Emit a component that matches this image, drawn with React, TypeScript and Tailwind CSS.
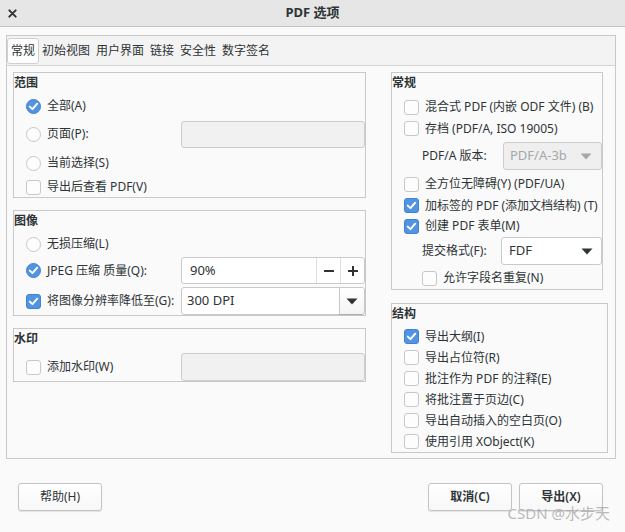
import React from 'react';

const FONT = "font-['Noto_Sans','Noto_Sans_CJK_SC',sans-serif]";

function CheckMark({ color = 'white' }: { color?: string }) {
  return (
    <svg viewBox="0 0 15 15" className="h-[15px] w-[15px]">
      <path d="M3.2 7.6 L6.3 10.6 L11.8 4.2" fill="none" stroke={color} strokeWidth="2.2" strokeLinecap="round" strokeLinejoin="round" />
    </svg>
  );
}

function Check({ on = false }: { on?: boolean }) {
  if (on) {
    return (
      <span className="flex h-[15px] w-[15px] shrink-0 items-center justify-center rounded-[3px] border border-[#3f82d3] bg-[#5294e2]">
        <CheckMark />
      </span>
    );
  }
  return <span className="h-[15px] w-[15px] shrink-0 rounded-[3px] border border-[#c8c8c8] bg-[#fdfdfd]" />;
}

function Radio({ on = false }: { on?: boolean }) {
  if (on) {
    return (
      <span className="flex h-[15px] w-[15px] shrink-0 items-center justify-center rounded-full border border-[#3f82d3] bg-[#5294e2]">
        <CheckMark />
      </span>
    );
  }
  return <span className="h-[15px] w-[15px] shrink-0 rounded-full border border-[#c8c8c8] bg-[#fdfdfd]" />;
}

function Arrow({ color = '#2e3436' }: { color?: string }) {
  return (
    <svg viewBox="0 0 12 7" className="h-[7px] w-[12px]">
      <path d="M0.5 0.5 H11.5 L6 6.5 Z" fill={color} />
    </svg>
  );
}

function Frame({ title, className = '', children }: { title: string; className?: string; children: React.ReactNode }) {
  return (
    <div className={`flex flex-col border border-[#c9c9c9] ${className}`}>
      <div className="h-[20px] text-[12px] leading-[20px] font-bold">{title}</div>
      {children}
    </div>
  );
}

function Row({ h, className = '', children }: { h: string; className?: string; children: React.ReactNode }) {
  return <div className={`flex shrink-0 items-center gap-[6px] ${h} ${className}`}>{children}</div>;
}

function DisabledEntry() {
  return <div className="ml-auto h-[28px] w-[184px] rounded-[3px] border border-[#cdcdcd] bg-[#f1f1f1]" />;
}

function Button({ label, bold = false }: { label: string; bold?: boolean }) {
  return (
    <button
      className={`h-[28px] w-[84px] rounded-[3px] border border-[#c4c4c4] bg-gradient-to-b from-white to-[#f7f7f7] text-[12px] shadow-[0_1px_1px_rgba(0,0,0,0.1)] ${bold ? 'font-semibold' : ''}`}
    >
      {label}
    </button>
  );
}

export default function App() {
  return (
    <div className={`relative flex h-[532px] w-[625px] flex-col overflow-hidden bg-[#fafafa] text-[12px] text-[#2e3436] ${FONT}`}>
      {/* title bar */}
      <div className="grid h-[27px] shrink-0 grid-cols-[1fr_auto_1fr] items-center border-b border-[#c4c4c4] bg-[#e6e6e6] px-[8px]">
        <svg viewBox="0 0 10 10" className="h-[9px] w-[9px]">
          <path d="M1.5 1.5 L8.5 8.5 M8.5 1.5 L1.5 8.5" stroke="#2e3436" strokeWidth="2.2" strokeLinecap="round" />
        </svg>
        <span className="text-[13px] font-bold">PDF 选项</span>
        <span />
      </div>

      {/* notebook */}
      <div className="mx-[6px] mt-[8px] flex h-[424px] w-[610px] flex-col border border-[#c9c9c9]">
        <div className="flex h-[30px] shrink-0 items-center border-b border-[#d4d4d4] bg-[#f3f3f3] text-[12px]">
          <span className="flex h-[26px] items-center rounded-[3px] border border-[#cfcfcf] bg-white px-[3px]">常规</span>
          <span className="px-[3px]">初始视图</span>
          <span className="px-[3px]">用户界面</span>
          <span className="px-[3px]">链接</span>
          <span className="px-[3px]">安全性</span>
          <span className="px-[3px]">数字签名</span>
        </div>

        <div className="flex flex-1 gap-[25px] px-[6px] pt-[6px]">
          {/* left column */}
          <div className="flex w-[353px] flex-col gap-[12px]">
            <Frame title="范围">
              <Row h="h-[26px]" className="pl-[12px]">
                <Radio on />
                <span>全部(A)</span>
              </Row>
              <Row h="h-[30px]" className="pl-[12px]">
                <Radio />
                <span>页面(P):</span>
                <div className="ml-auto h-[27px] w-[184px] rounded-[3px] border border-[#cdcdcd] bg-[#f1f1f1]" />
              </Row>
              <Row h="h-[28px]" className="pl-[12px]">
                <Radio />
                <span>当前选择(S)</span>
              </Row>
              <Row h="h-[20px]" className="pl-[12px]">
                <Check />
                <span>导出后查看 PDF(V)</span>
              </Row>
            </Frame>

            <Frame title="图像">
              <Row h="h-[26px]" className="pl-[12px]">
                <Radio />
                <span>无损压缩(L)</span>
              </Row>
              <Row h="h-[27px]" className="pl-[12px]">
                <Radio on />
                <span>JPEG 压缩 质量(Q):</span>
                <div className="ml-auto flex h-[27px] w-[184px] rounded-[3px] border border-[#c9c9c9] bg-white">
                  <span className="flex flex-1 items-center pl-[8px] text-[13px]">90%</span>
                  <span className="flex w-[24px] items-center justify-center border-l border-[#e0e0e0]">
                    <svg viewBox="0 0 12 12" className="h-[12px] w-[12px]">
                      <path d="M1 6 H11" stroke="#2e3436" strokeWidth="2" />
                    </svg>
                  </span>
                  <span className="flex w-[24px] items-center justify-center border-l border-[#e0e0e0]">
                    <svg viewBox="0 0 12 12" className="h-[12px] w-[12px]">
                      <path d="M1 6 H11 M6 1 V11" stroke="#2e3436" strokeWidth="2" />
                    </svg>
                  </span>
                </div>
              </Row>
              <Row h="h-[28px]" className="mt-[3px] pl-[12px]">
                <Check on />
                <span>将图像分辨率降低至(G):</span>
                <div className="ml-auto flex h-[28px] w-[184px] rounded-[3px] border border-[#c9c9c9] bg-white">
                  <span className="flex flex-1 items-center pl-[5px] text-[13px]">300 DPI</span>
                  <span className="flex w-[25px] items-center justify-center rounded-r-[3px] border-l border-[#c9c9c9] bg-gradient-to-b from-white to-[#f4f4f4] shadow-[0_1px_1px_rgba(0,0,0,0.15)]">
                    <Arrow />
                  </span>
                </div>
              </Row>
            </Frame>

            <Frame title="水印">
              <Row h="h-[28px]" className="mt-[4px] pl-[12px]">
                <Check />
                <span>添加水印(W)</span>
                <DisabledEntry />
              </Row>
            </Frame>
          </div>

          {/* right column */}
          <div className="flex w-[217px] flex-col gap-[13px]">
            <Frame title="常规" className="w-[212px]">
              <Row h="h-[22px]" className="mt-[3px] pl-[12px]">
                <Check />
                <span className="whitespace-nowrap">混合式 PDF (内嵌 ODF 文件) (B)</span>
              </Row>
              <Row h="h-[21px]" className="pl-[12px]">
                <Check />
                <span>存档 (PDF/A, ISO 19005)</span>
              </Row>
              <Row h="h-[34px]" className="pl-[30px]">
                <span>PDF/A 版本:</span>
                <div className="ml-auto flex h-[28px] w-[99px] items-center justify-between rounded-[3px] border border-[#cdcdcd] bg-[#efefef] pr-[9px] pl-[6px] text-[13px] text-[#a5a8aa]">
                  <span>PDF/A-3b</span>
                  <Arrow color="#a5a8aa" />
                </div>
              </Row>
              <Row h="h-[22px]" className="pl-[12px]">
                <Check />
                <span>全方位无障碍(Y) (PDF/UA)</span>
              </Row>
              <Row h="h-[21px]" className="pl-[12px]">
                <Check on />
                <span className="whitespace-nowrap">加标签的 PDF (添加文档结构) (T)</span>
              </Row>
              <Row h="h-[20px]" className="pl-[12px]">
                <Check on />
                <span>创建 PDF 表单(M)</span>
              </Row>
              <Row h="h-[30px]" className="pl-[30px]">
                <span>提交格式(F):</span>
                <div className="ml-auto flex h-[28px] w-[101px] items-center justify-between rounded-[3px] border border-[#c9c9c9] bg-white pr-[8px] pl-[7px] text-[13px]">
                  <span>FDF</span>
                  <Arrow />
                </div>
              </Row>
              <Row h="h-[23px]" className="pt-[1px] pl-[30px]">
                <Check />
                <span>允许字段名重复(N)</span>
              </Row>
            </Frame>

            <Frame title="结构" className="w-[217px]">
              <div className="mt-[2px] flex flex-col pl-[12px]">
                <Row h="h-[21px]">
                  <Check on />
                  <span>导出大纲(I)</span>
                </Row>
                <Row h="h-[21px]">
                  <Check />
                  <span>导出占位符(R)</span>
                </Row>
                <Row h="h-[21px]">
                  <Check />
                  <span>批注作为 PDF 的注释(E)</span>
                </Row>
                <Row h="h-[21px]">
                  <Check />
                  <span>将批注置于页边(C)</span>
                </Row>
                <Row h="h-[21px]">
                  <Check />
                  <span>导出自动插入的空白页(O)</span>
                </Row>
                <Row h="h-[21px]">
                  <Check />
                  <span>使用引用 XObject(K)</span>
                </Row>
              </div>
            </Frame>
          </div>
        </div>
      </div>

      {/* buttons */}
      <div className="mt-[24px] flex pr-[22px] pl-[18px]">
        <Button label="帮助(H)" />
        <div className="ml-auto flex gap-[7px]">
          <Button label="取消(C)" bold />
          <Button label="导出(X)" bold />
        </div>
      </div>

      <span className="pointer-events-none absolute right-[15px] bottom-[8px] text-[15px] text-[#a9a9a9]/80">CSDN @水步天</span>
    </div>
  );
}
